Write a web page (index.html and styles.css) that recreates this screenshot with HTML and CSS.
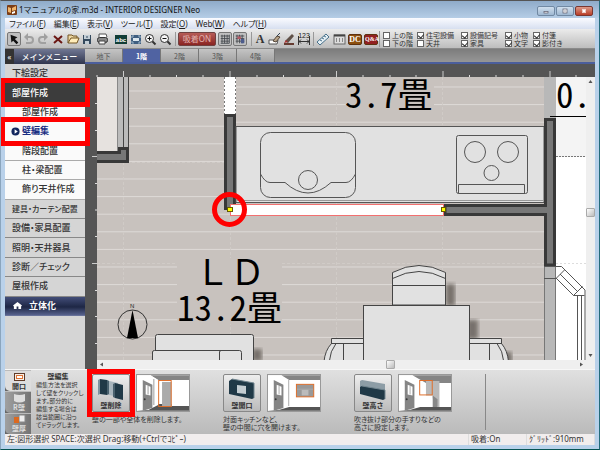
FILE: index.html
```html
<!DOCTYPE html>
<html lang="ja">
<head>
<meta charset="utf-8">
<title>1マニュアルの家.m3d - INTERIOR DESIGNER Neo</title>
<link rel="stylesheet" href="styles.css">
</head>
<body>
<div class="window">
  <header class="titlebar">
    <svg class="app-icon" viewBox="0 0 10 10"><rect width="10" height="10" rx="1" fill="#7b3d16"/><path d="M1 2l3 1v5l-3-1zM5 3l4-2v4l-4 1z" fill="#f2b56b"/><path d="M5 7l3-1v2l-3 1z" fill="#fff"/></svg>
    <h1>1マニュアルの家.m3d - INTERIOR DESIGNER Neo</h1>
    <div class="win-buttons">
      <button aria-label="最小化"><svg viewBox="0 0 18 10"><rect x="6.5" y="5.500" width="5" height="2" fill="#fff" stroke="#667"/></svg></button>
      <button aria-label="最大化"><svg viewBox="0 0 18 10"><rect x="6.5" y="2.500" width="5" height="5" fill="#fff" stroke="#667"/><path d="M8 5h2" stroke="#667"/></svg></button>
      <button class="close" aria-label="閉じる"><svg viewBox="0 0 18 10"><path d="M7 3l4 4M11 3l-4 4" stroke="#fff" stroke-width="2"/></svg></button>
    </div>
  </header>

  <nav class="menubar">
    <a href="#">ファイル(<u>F</u>)</a><a href="#">編集(<u>E</u>)</a><a href="#">表示(<u>V</u>)</a><a href="#">ツール(<u>T</u>)</a><a href="#">設定(<u>O</u>)</a><a href="#">Web(<u>W</u>)</a><a href="#">ヘルプ(<u>H</u>)</a>
  </nav>

  <div class="toolbar">
    <div class="tools file-tools">
      <button class="pressed" aria-label="選択"><svg viewBox="0 0 14 14"><path d="M3 2l1 9 2-2 4 4 2-2-4-4 3-2z" fill="#111"/></svg></button>
      <button aria-label="元に戻す"><svg viewBox="0 0 14 14"><path d="M3 5h5q3 0 3 3t-3 3H4" fill="none" stroke="#a0a0a0" stroke-width="2"/><path d="M6 1v8L2 5z" fill="#a0a0a0"/></svg></button>
      <button aria-label="やり直し"><svg viewBox="0 0 14 14"><path d="M11 5H6Q3 5 3 8t3 3h4" fill="none" stroke="#a0a0a0" stroke-width="2"/><path d="M8 1v8l4-4z" fill="#a0a0a0"/></svg></button>
      <button aria-label="削除"><svg viewBox="0 0 14 14"><path d="M3 4l8 7M11 4l-8 7" stroke="#6b1713" stroke-width="2"/></svg></button>
      <button aria-label="開く"><svg viewBox="0 0 14 14"><path d="M2 11V3h4l1 1h4v3" fill="#eed9a5" stroke="#735522"/><path d="M2 11l3-5h8l-2 5z" fill="#ffedb9" stroke="#735522"/></svg></button>
      <button aria-label="保存"><svg viewBox="0 0 14 14"><rect x="3" y="3" width="8" height="9" fill="#34495d"/><path d="M4 3h6v4H4zM5 9h4v3H5z" fill="#c3ced6"/><path d="M7 4v2" stroke="#34495d"/></svg></button>
      <button aria-label="印刷"><svg viewBox="0 0 14 14"><path d="M4 5V2h7l1 3" fill="#fff" stroke="#555"/><rect x="2.500" y="5.500" width="10" height="5" rx="2" fill="#888" stroke="#333"/><path d="M4 9h6v3H4z" fill="#fff" stroke="#444"/></svg></button>
    </div>
    <div class="tools view-tools">
      <button aria-label="文字表示"><svg viewBox="0 0 14 14"><rect x="1" y="3" width="12" height="9" fill="#123e36"/><text x="7" y="10" class="icon-abc">abc</text></svg></button>
      <button aria-label="全体表示"><svg viewBox="0 0 14 14"><rect x="2" y="3" width="10" height="9" fill="#405f80"/><path d="M4 6h6v3H4z" fill="#dce7ee"/><path d="M3 6V4h2M9 4h2v2M3 9v2h2M9 11h2V9" stroke="#9db6c8" fill="none"/></svg></button>
      <button aria-label="拡大"><svg viewBox="0 0 14 14"><circle cx="6.500" cy="6.500" r="4" fill="#f6f6f6" stroke="#333"/><path d="M4.500 6.500h4M6.500 4.500v4" stroke="#111"/><path d="M9.500 9.500l3 3" stroke="#333" stroke-width="2"/></svg></button>
      <button aria-label="縮小"><svg viewBox="0 0 14 14"><circle cx="6.500" cy="6.500" r="4" fill="#f6f6f6" stroke="#333"/><path d="M4.500 6.500h4" stroke="#111"/><path d="M9.500 9.500l3 3" stroke="#333" stroke-width="2"/></svg></button>
    </div>
    <div class="tools snap-tools">
      <button class="snap">吸着ON</button>
      <button class="pressed" aria-label="グリッド"><svg viewBox="0 0 14 14"><path d="M3.500 2v10M6.500 2v10M9.500 2v10M2 3.500h10M2 6.500h10M2 9.500h10M12 2v10H2" stroke="#41464c" fill="none"/></svg></button>
      <button class="pressed" aria-label="グリッド吸着"><svg viewBox="0 0 14 14"><path d="M3.500 2v10M6.500 2v10M9.500 2v10M2 3.500h10M2 6.500h10M2 9.500h10" stroke="#41464c"/><path d="M4 4h4v3H4z" fill="#b35b66"/><path d="M8 7h4v5H8z" fill="#4d5c8c"/></svg></button>
    </div>
    <div class="tools draw-tools">
      <button class="letter" aria-label="文字">A</button>
      <button aria-label="消しゴム"><svg viewBox="0 0 14 14"><path d="M1 8h9l-1 4H1z" fill="#fff" stroke="#555"/><path d="M5 9l4-5 3 1-4 5z" fill="#b7a389" stroke="#564739"/><path d="M9 4l3-3" stroke="#345"/></svg></button>
      <button aria-label="ペン"><svg viewBox="0 0 14 14"><path d="M3 9l7-7 2 2-6 7z" fill="#605148"/><path d="M2 11l2-3 2 2z" fill="#a33"/><path d="M2 12h10" stroke="#653b31" stroke-width="2"/></svg></button>
      <button aria-label="寸法"><svg viewBox="0 0 14 14"><text x="7" y="6" class="icon-num">123</text><path d="M1.500 4v9M12.500 4v9M2 9.500h10M4 7.500l-2 2 2 2M10 7.500l2 2-2 2" fill="none" stroke="#333"/></svg></button>
    </div>
    <div class="tools info-tools">
      <button aria-label="定規"><svg viewBox="0 0 14 14"><path d="M1 10l9-8 3 3-9 8z" fill="#e6f0f5" stroke="#48718b"/><path d="M4 8l2 1M6 6l2 1M8 4l2 1" stroke="#48718b"/></svg></button>
      <button aria-label="リスト"><svg viewBox="0 0 14 14"><rect x="2" y="3" width="11" height="9" fill="#ddd" stroke="#666"/><path d="M2 3.500h11" stroke="#444" stroke-width="2"/><path d="M4.500 6v4M7.500 6v4M10.500 6v4" stroke="#888"/></svg></button>
      <button class="badge dc">DC</button>
      <button class="badge qa">Q&amp;A</button>
    </div>
    <div class="checks">
      <div><label><input type="checkbox">上の階</label><label><input type="checkbox">下の階</label></div>
      <div><label><input type="checkbox" checked>住宅設備</label><label><input type="checkbox">天井</label></div>
      <div><label><input type="checkbox" checked>設備記号</label><label><input type="checkbox" checked>家具</label></div>
      <div><label><input type="checkbox" checked>小物</label><label><input type="checkbox" checked>文字</label></div>
      <div><label><input type="checkbox" checked>付箋</label><label><input type="checkbox" checked>影付き</label></div>
    </div>
  </div>

  <main class="workspace">
    <aside class="sidebar">
      <h2><button class="collapse" aria-label="折りたたむ">«</button><span>メインメニュー</span></h2>
      <nav class="main-menu">
        <a href="#">下絵設定</a>
        <a href="#" class="open marked">部屋作成</a>
        <a href="#" class="sub">部屋作成</a>
        <a href="#" class="sub current marked"><svg viewBox="0 0 10 10"><circle cx="5" cy="5" r="4.500" fill="#12265e"/><path d="M4 2.500v5L7.500 5z" fill="#fff"/></svg>壁編集</a>
        <a href="#" class="sub">階段配置</a>
        <a href="#" class="sub">柱・梁配置</a>
        <a href="#" class="sub">飾り天井作成</a>
        <a href="#" class="long">建具・カーテン配置</a>
        <a href="#">設備・家具配置</a>
        <a href="#">照明・天井器具</a>
        <a href="#">診断／チェック</a>
        <a href="#">屋根作成</a>
        <a href="#" class="solid"><svg viewBox="0 0 10 10"><path d="M5 1l5 4-1 1v3H6V6H4v3H1V6L0 5z" fill="#fff"/></svg>立体化</a>
      </nav>
    </aside>

    <section class="plan">
      <div class="tabs">
        <button>地下</button><button class="active">1階</button><button>2階</button><button>3階</button><button>4階</button>
      </div>
      <div class="view">
        <svg class="ruler-top" viewBox="85 64 510 13" preserveAspectRatio="xMinYMin slice"><path d="M123.500 71v6M230 71v6M336.500 71v6M443 71v6M550 71v6" stroke="#ccc"/><path d="M150 75v2M176.500 75v2M203 75v2M257 75v2M283.500 75v2M310 75v2M363 75v2M390 75v2M416 75v2M469.500 75v2M496 75v2M523 75v2M576 75v2M97 75v2" stroke="#ddd"/></svg>
        <svg class="ruler-left" viewBox="85 77 12 292" preserveAspectRatio="xMinYMin slice"><path d="M92 156.500h5M92 263.500h5" stroke="#ccc"/><path d="M95 103.500h2M95 130.500h2M95 183.500h2M95 210h2M95 236.500h2M95 290.500h2M95 316.500h2M95 343.500h2" stroke="#ddd"/></svg>
        <svg class="canvas" viewBox="97 77 489 283" preserveAspectRatio="xMinYMin slice">
          <defs>
            <pattern id="boards" x="0" y="90.500" width="40" height="17.6" patternUnits="userSpaceOnUse"><path d="M0 .5h40" stroke="#dedad7"/></pattern>
            <pattern id="boards-kitchen" x="0" y="86.500" width="40" height="17.6" patternUnits="userSpaceOnUse"><path d="M0 .5h40" stroke="#dedad7"/></pattern>
            <filter id="soft"><feGaussianBlur stdDeviation="2"/></filter>
          </defs>
          <rect x="97" y="77" width="489" height="283" fill="#c8c2be"/>
          <rect x="97" y="77" width="489" height="283" fill="url(#boards)"/>
          <rect x="236" y="77" width="308" height="130" fill="#c8c2be"/>
          <rect x="236" y="77" width="308" height="130" fill="url(#boards-kitchen)"/>
          <path d="M123.500 77v283M230.500 77v283M336.500 77v283M442.500 77v283M97 162.500h489M97 263.500h489" stroke="#d0cbc7" stroke-dasharray="3 2"/>

          <g stroke="#444">
            <path d="M97 77h21v74H97z" fill="#e6e2df" stroke="none"/>
            <path d="M118 77h11v71h-11z" fill="#bbb" stroke="none"/>
            <path d="M117.500 77v74" stroke="#888"/><path d="M123.500 77v70M128.500 77v70"/>
            <path d="M96 152.500h23.500v-4h8v13H96" fill="#777" stroke="#383838" stroke-width="3"/>
          </g>

          <rect x="224" y="77" width="12" height="37" fill="#fff"/>
          <path d="M224.500 77v37M235.500 77v37" stroke="#777" stroke-dasharray="2 2"/>
          <rect x="225.500" y="115.500" width="9" height="93" fill="#777" stroke="#383838" stroke-width="3"/>

          <rect x="236" y="126.500" width="308" height="76" fill="#e1e1e1" stroke="#555"/>
          <path d="M236 200.500h308" stroke="#999"/>
          <g fill="none" stroke="#555">
            <rect x="260.500" y="132.500" width="95" height="65" rx="10"/>
            <path d="M260.500 174Q265 182.500 270 182.500h15Q308 203.500 331 182.500h15Q351 182.500 355.500 174"/>
            <circle cx="308" cy="180" r="9.500"/>
            <rect x="456.500" y="135.500" width="71" height="58" rx="2"/>
            <circle cx="475" cy="152" r="10.500"/><circle cx="508" cy="152" r="10.500"/><circle cx="491.500" cy="173" r="7.500"/>
            <path d="M458.500 193.500v-9h66v9"/>
          </g>

          <rect x="556" y="77" width="30" height="283" fill="#fff"/>
          <rect x="556" y="77" width="30" height="80" fill="#f4f4f4"/>
          <path d="M556 156.500h30" stroke="#777" stroke-dasharray="2 1"/>
          <path d="M556 263.500h30" stroke="#ddd" stroke-dasharray="2 2"/>
          <rect x="544" y="77" width="12" height="41" fill="#b8b8b8"/>
          <rect x="544.500" y="266.500" width="11" height="100" fill="#b8b8b8" stroke="#777"/>
          <path d="M544 278.500h12" stroke="#555"/>
          <path d="M545.500 119.500h9V265h-9V214.500H445v-9H545.500z" fill="#777" stroke="#383838" stroke-width="3"/>
          <path d="M544 207h4v6h-4z" fill="#777"/>
          <path d="M550 116.500h36" stroke="#000"/>
          <path d="M556 266.500h5.500l23.500 23.500v70M556 278l17.500 17.500h11M573.500 295.500l9-9M556.500 278l8-8M560 274l17 17M577.500 295.500V360M581.500 295.500V360" fill="none" stroke="#555"/>

          <rect x="230.500" y="204.500" width="213" height="11" fill="#fff" stroke="#f27070"/>

          <rect x="446" y="284" width="9" height="22" fill="#77716c" filter="url(#soft)"/>
          <rect x="467" y="320" width="11" height="19" fill="#77716c" filter="url(#soft)"/>
          <rect x="252" y="349" width="10" height="12" fill="#77716c" filter="url(#soft)"/>
          <rect x="502" y="352" width="10" height="12" fill="#77716c" filter="url(#soft)"/>
          <g fill="#e1e1e1" stroke="#444">
            <path d="M392.500 305V272.500Q419 258.500 445.500 272.500V305z"/>
            <path d="M392.500 278.500Q419 264.500 445.500 278.500M392.500 285.500h53" fill="none"/>
            <path d="M331.500 338.500H501.500v5q6 7 7 18H324q1-11 7.500-18z"/>
            <path d="M331 343.500h171M336 343.500q-6 8-6.500 17M343.500 344v17M489.500 344v17M497 343.500q6 8 6.500 17" fill="none"/>
            <rect x="363.500" y="305.500" width="106" height="60"/>
            <rect x="155.500" y="334.500" width="98" height="32" rx="2"/>
            <path d="M152.500 361v-9q0-1.500 2-1.500h85q2 0 2 2v9M219.500 361v-9q0-1.500 2-1.500"/>
          </g>

          <g fill="none" stroke="#333"><circle cx="132.500" cy="324.500" r="14.500"/><path d="M132.500 310l5.500 28h-11z" fill="#000" stroke="none"/></g>
          <text x="130" y="308" class="north">N</text>

          <rect x="346" y="78" width="88" height="34" fill="#c8c2be"/>
          <rect x="177" y="258" width="105" height="66" fill="#c8c2be"/>
          <text class="room" x="345" y="108">3.7畳</text>
          <text class="room wide" x="195" y="285">ＬＤ</text>
          <text class="room" x="177" y="321">13.2畳</text>
          <text class="room" x="556" y="108">0.</text>

          <circle cx="229.500" cy="209.500" r="15" fill="none" stroke="#f00" stroke-width="5"/>
          <rect x="227.500" y="207.500" width="5" height="4" fill="#ff0" stroke="#665b00"/>
          <rect x="441.500" y="207.500" width="4" height="4" fill="#ff0" stroke="#665b00"/>
        </svg>
        <div class="scroll-v">
          <svg viewBox="0 0 9 9"><path d="M2.500 6h4l-2-3z" fill="#555"/></svg><i></i><svg viewBox="0 0 9 9"><path d="M2.500 3h4l-2 3z" fill="#555"/></svg>
        </div>
        <div class="scroll-h">
          <svg viewBox="0 0 9 9"><path d="M6 2.500v4l-3-2z" fill="#555"/></svg><i></i><svg viewBox="0 0 9 9"><path d="M3 2.500v4l3-2z" fill="#555"/></svg>
        </div>
      </div>
    </section>
  </main>

  <section class="panel">
    <div class="modes">
      <button class="active"><svg viewBox="0 0 13 10"><rect x="1.500" y="1.500" width="10" height="7" fill="#f8eee6" stroke="#603c29"/><rect x="3.500" y="3.500" width="6" height="3" fill="#fff" stroke="#df7435"/></svg>開口</button>
      <button><svg viewBox="0 0 13 10"><path d="M1 1q5.500 2 11 0v7q-5.500 3-11 0z" fill="#ddd"/></svg>R壁</button>
      <button><svg viewBox="0 0 13 10"><path d="M6 1h6v7H6z" fill="#eee" stroke="#888"/><path d="M1 3h5v6H1z" fill="#dc6920"/></svg>壁厚</button>
    </div>
    <div class="about">
      <h3>壁編集</h3>
      <p>編集方法を選択<br>して壁をクリックし<br>ます。部分的に<br>編集する場合は<br>該当範囲に沿っ<br>てドラッグします。</p>
    </div>
    <div class="commands">
      <article>
        <button class="command marked"><svg viewBox="0 0 28 24"><path d="M8 3l13 3v14L8 17z" fill="#a7b5bd"/><path d="M1 3l2-1v15l-2 1z" fill="#7d929f"/><path d="M3 2l7 1v15l-7-1zM18 6l8 2v15l-8-2z" fill="#203947"/><path d="M10 3l2 1v13l-2 1zM16 7l2-1v15l-2-1z" fill="#49616e"/></svg>壁削除</button>
        <svg class="preview" viewBox="0 0 54 37"><rect width="54" height="37" fill="#fff"/><path d="M0 0h54v5H22L14 0z" fill="#858585"/><path d="M0 37l12-1 10-6h32v7z" fill="#555"/><path d="M14 0l8 5v26l-10 5H6V5z" fill="#fff"/><path d="M6 5l10 5v24L6 37z" fill="#858585"/><path d="M9 10l5 2v9l-5-1z" fill="#fff"/><path d="M11.500 11v9M17.500 4v27" stroke="#999" fill="none"/><circle cx="8" cy="25" r="1" fill="#333"/><path d="M26 7h10v26H26z" fill="#aaa"/><path d="M36 5h18v27H36z" fill="#fff"/><rect x="22.500" y="5.500" width="13" height="27" fill="none" stroke="#df6c27"/></svg>
        <p>壁の一部や全体を削除します。</p>
      </article>
      <article>
        <button class="command"><svg viewBox="0 0 28 24"><path d="M1 4l3-2 22 4v15l-2 1L1 17z" fill="#203947"/><path d="M4 2l22 4v15" fill="none" stroke="#71858f"/><path d="M9 8l9 1v8l-9-1z" fill="#c4cdd2"/></svg>壁開口</button>
        <svg class="preview" viewBox="0 0 54 37"><rect width="54" height="37" fill="#fff"/><path d="M0 0h54v5H22L14 0z" fill="#858585"/><path d="M0 37l12-1 10-3h32v4z" fill="#555"/><path d="M6 5l10 5v24L6 37z" fill="#858585"/><path d="M9 10l5 2v9l-5-1z" fill="#fff"/><path d="M11.500 11v9M21.500 5v27" stroke="#aaa" fill="none"/><circle cx="8" cy="25" r="1" fill="#333"/><rect x="29.500" y="9.500" width="18" height="13" fill="#999" stroke="#df6c27"/><path d="M35 15h7v6h-7z" fill="#bbb"/><path d="M30 14.500h17" stroke="#aaa"/></svg>
        <p>対面キッチンなど、<br>壁の中間に穴を開けます。</p>
      </article>
      <article>
        <button class="command"><svg viewBox="0 0 28 24"><path d="M1 4l2-1 23 4v8L1 11z" fill="#8d9da6"/><path d="M1 10l2-1 23 4v9l-2 1-23-6z" fill="#203947"/><path d="M3 9l23 4v9" fill="none" stroke="#71858f"/></svg>壁高さ</button>
        <svg class="preview" viewBox="0 0 54 37"><rect width="54" height="37" fill="#fff"/><path d="M0 0h54v8H28L14 0z" fill="#858585"/><path d="M0 37l12-1 10-3h32v4z" fill="#555"/><path d="M6 5l10 5v24L6 37z" fill="#858585"/><path d="M9 10l5 2v9l-5-1z" fill="#fff"/><path d="M11.500 11v9" stroke="#aaa"/><circle cx="8" cy="25" r="1" fill="#333"/><path d="M28 6h14v27h-2l-5-9v-3h-7z" fill="#b9b9b9"/><path d="M35 21l5 4v8h-5z" fill="#888"/><rect x="21.500" y="5.500" width="13" height="15" fill="none" stroke="#df6c27"/></svg>
        <p>吹き抜け部分の手すりなどの<br>高さに設定します。</p>
      </article>
    </div>
  </section>

  <footer class="status">
    <span>左:図形選択 SPACE:次選択 Drag:移動(+Ctrlでｺﾋﾟｰ)</span>
    <span>吸着:On</span>
    <span>ｸﾞﾘｯﾄﾞ:910mm</span>
  </footer>
</div>
</body>
</html>
```
FILE: styles.css
```css
* { box-sizing: border-box; }

body {
  margin: 0;
  font: 8px/10px "Noto Sans", "Noto Sans CJK JP", sans-serif;
  color: #333;
  background: #0b5a63;
}

button {
  margin: 0;
  padding: 0;
  border: 0;
  background: none;
  color: inherit;
  font: inherit;
}

a { color: inherit; text-decoration: none; }
h1, h2, h3, p { margin: 0; font: inherit; }
svg { display: block; }

.window {
  display: flex;
  flex-direction: column;
  height: 100vh;
  min-height: 450px;
  padding: 0 4px 4px;
  overflow: hidden;
  border-top: 1px solid #555;
  border-right: 1px solid #246b7b;
  border-bottom: 1px solid #075454;
  border-left: 1px solid #8ba5bd;
  background: #b9d1ea;
}

/* Title bar */
.titlebar {
  display: flex;
  align-items: center;
  flex: 0 0 17px;
  gap: 2px;
  margin: 0 -4px;
  padding: 0 6px;
  background: linear-gradient(#8fabc9, #b5cde6);
}
.app-icon { width: 10px; height: 10px; }
.titlebar h1 { flex: 1; font-size: 8px; color: #111; white-space: nowrap; }
.win-buttons { display: flex; gap: 1px; padding-top: 2px; }
.win-buttons button {
  width: 18px;
  height: 10px;
  border: 1px solid #7189a3;
  border-radius: 2px;
  background: linear-gradient(#d0dfee, #9fb8d2);
}
.win-buttons .close { border-color: #7a3730; background: linear-gradient(#dc9a89, #b93d27); }
.win-buttons svg { width: 100%; height: 100%; }

/* Menu bar */
.menubar {
  display: flex;
  align-items: center;
  flex: 0 0 11px;
  gap: 8px;
  padding-left: 4px;
  background: linear-gradient(#fafbff, #d7dff0);
  color: #222;
  font-feature-settings: "palt";
}

/* Toolbar */
.toolbar {
  display: flex;
  align-items: center;
  flex: 0 0 20px;
  padding: 1px 0 0 2px;
  background: linear-gradient(#ebebeb, #bdbdbd);
  border-bottom: 1px solid #8a8a8a;
}
.tools { display: flex; justify-content: space-between; align-items: center; flex: none; height: 14px; }
.tools button { width: 14px; height: 14px; }
.tools svg { width: 100%; height: 100%; }
.file-tools { width: 102px; margin-right: 5px; }
.view-tools { width: 58px; }
.snap-tools { width: 72px; margin-left: 3px; padding-left: 2px; border-left: 1px solid #999; }
.draw-tools { width: 60px; margin-left: 4px; padding-left: 1px; border-left: 1px solid #999; }
.info-tools { width: 65px; margin-left: 2px; padding-left: 2px; border-left: 1px solid #999; }
.tools .pressed { border: 1px solid #777; border-radius: 2px; background: #c0c0c0; }
.tools .snap {
  width: 38px;
  border: 1px solid #6f4140;
  border-radius: 2px;
  background: linear-gradient(#b65c57, #8a2422);
  color: #e3b5b1;
}
.tools .letter { font: bold 12px/14px "Liberation Serif", serif; }
.tools .badge {
  height: 11px;
  border: 1px solid #5f3210;
  border-radius: 2px;
  color: #fff;
  font: bold 8px/9px "Liberation Serif", serif;
}
.tools .dc { background: #8d500f; }
.tools .qa { background: #922022; font-size: 6px; }
.icon-abc { fill: #fff; font: bold 6px "Liberation Sans", sans-serif; text-anchor: middle; }
.icon-num { fill: #222; font: 7px "Liberation Sans", sans-serif; text-anchor: middle; }

.checks {
  display: grid;
  grid-template-columns: 34px 44px 44px 28px 40px;
  margin-left: 1px;
  padding-left: 3px;
  border-left: 1px solid #999;
  font: 7px/8px "Noto Sans CJK JP", sans-serif;
  white-space: nowrap;
}
.checks label { display: flex; align-items: center; gap: 2px; height: 8px; }
.checks input {
  appearance: none;
  display: grid;
  place-items: center;
  width: 7px;
  height: 7px;
  margin: 0;
  border: 1px solid #666;
  background: #fff;
}
.checks input:checked::before {
  content: "";
  width: 3px;
  height: 4px;
  border: solid #333;
  border-width: 0 1px 1px 0;
  transform: rotate(40deg);
}

/* Workspace */
.workspace { display: flex; flex: 1; min-height: 0; }
.sidebar { flex: 0 0 80px; background: #d5d5d5; }
.sidebar h2 {
  display: flex;
  align-items: center;
  height: 15px;
  background: linear-gradient(#707793, #30364e);
  color: #fff;
  font: 500 8px/14px "Noto Sans CJK JP", sans-serif;
}
.sidebar h2 span { flex: 1; text-align: center; }
.collapse { width: 9px; height: 15px; background: #333; }

.main-menu {
  display: grid;
  grid-template-rows: repeat(13, 1fr);
  height: 252px;
  font: 500 9px/18px "Noto Sans CJK JP", sans-serif;
  font-feature-settings: "palt";
  white-space: nowrap;
}
.main-menu a {
  display: flex;
  align-items: center;
  padding-left: 7px;
  border-bottom: 1px solid #888;
}
.main-menu .sub { padding-left: 17px; background: #fafafa; border-color: #aaa; }
.main-menu .open { background: #3c3c3c; color: #fff; }
.main-menu .current { gap: 2px; padding-left: 6px; color: #182d83; font-weight: bold; }
.main-menu .long { font-size: 8px; }
.main-menu .solid {
  gap: 7px;
  padding-left: 8px;
  border-color: #68729a;
  background: linear-gradient(#424d78, #1e2745 55%, #56618c);
  color: #fff;
  font-weight: bold;
}
.main-menu svg { width: 9px; height: 9px; }

.marked { position: relative; }
.marked::after {
  content: "";
  position: absolute;
  z-index: 2;
  inset: -5px;
  border: 5px solid #f00;
}

/* Plan */
.plan { display: flex; flex: 1; flex-direction: column; min-width: 0; }
.tabs {
  display: flex;
  flex: 0 0 15px;
  background: linear-gradient(#7c7c7c, #969696);
  border-bottom: 2px solid #4b5e9c;
}
.tabs button {
  width: 38px;
  border-right: 1px solid #777;
  background: linear-gradient(#c4c4c4, #a2a2a2);
  color: #555;
  font: 7px/12px "Noto Sans CJK JP", sans-serif;
}
.tabs .active { background: #5063a2; color: #fff; font-weight: bold; }

.view {
  display: grid;
  flex: 1;
  grid-template: 13px minmax(0, 1fr) 9px / 12px minmax(0, 1fr) 9px;
  min-height: 0;
}
.view > svg { width: 100%; height: 100%; }
.ruler-top { grid-area: 1 / 1 / 2 / 4; background: #555; }
.ruler-left { grid-area: 2 / 1 / 4 / 2; background: #555; }
.canvas { grid-area: 2 / 2; }
.scroll-v, .scroll-h {
  display: flex;
  align-items: center;
  justify-content: space-between;
  background: #efefef;
}
.scroll-v svg, .scroll-h svg { width: 9px; height: 9px; }
.scroll-v { grid-area: 2 / 3; flex-direction: column; }
.scroll-v i { margin-top: 136px; margin-bottom: 0; }
.scroll-h { grid-area: 3 / 2 / 4 / 4; padding-right: 9px; }
.scroll-h i { margin-left: 97px; }
.scroll-v i, .scroll-h i {
  width: 9px;
  height: 9px;
  border: 1px solid #aaa;
  border-radius: 1px;
  background: linear-gradient(135deg, #fff, #bbb);
}
.scroll-v i { margin: 0 0 12px; translate: none; }
.room {
  fill: #000;
  font: 35px "Noto Sans CJK JP", sans-serif;
  font-feature-settings: "hwid";
}
.wide { font-feature-settings: normal; }
.north { fill: #222; font: 6px "Liberation Sans", sans-serif; }

/* Command panel */
.panel {
  display: flex;
  flex: 0 0 65px;
  border-top: 1px solid #f7f7f7;
  background: linear-gradient(#e0e0e0, #bababa);
}
.modes { display: flex; flex: 0 0 26px; flex-direction: column; background: #666; }
.modes button {
  flex: 1;
  padding-left: 2px;
  border-top: 1px solid #bbb;
  border-bottom-left-radius: 5px;
  background: linear-gradient(90deg, #a0a0a0, #737373);
  color: #ddd;
  font: bold 7px/9px "Noto Sans CJK JP", sans-serif;
}
.modes .active { background: #ddd; color: #333; }
.modes svg { width: 13px; height: 10px; margin: 0 auto; }
.about {
  flex: 0 0 54px;
  min-width: 0;
  padding: 1px 0 0 5px;
  font: 6px/8px "Noto Sans CJK JP", sans-serif;
  font-feature-settings: "palt";
  white-space: nowrap;
}
.about h3 { padding-right: 5px; font-size: 7px; font-weight: bold; line-height: 10px; text-align: center; }

.commands {
  display: grid;
  grid-template-columns: repeat(3, 131px);
  height: 56px;
  margin-top: 4px;
  padding-left: 7px;
  border-right: 1px solid #888;
}
.commands article {
  display: grid;
  grid-template: 38px auto / 38px 54px;
  gap: 3px 6px;
  align-content: start;
}
.command {
  display: flex;
  flex-direction: column;
  align-items: center;
  border: 1px solid #888;
  border-radius: 2px;
  background: linear-gradient(#eee, #bbb);
  font: bold 7px/8px "Noto Sans CJK JP", sans-serif;
}
.commands .marked::after { inset: -6px; }
.command svg { width: 28px; height: 24px; margin-top: 2px; }
.preview { width: 54px; height: 38px; border: 1px solid #999; }
.commands p {
  grid-column: 1 / 3;
  font: 7px/8px "Noto Sans CJK JP", sans-serif;
  font-feature-settings: "palt";
  white-space: nowrap;
}

/* Status bar */
.status {
  display: grid;
  grid-template-columns: 1fr 58px 68px;
  flex: 0 0 11px;
  background: #f1eded;
}
.status span { padding-left: 2px; border-right: 1px solid #ddd; white-space: nowrap; }
```
